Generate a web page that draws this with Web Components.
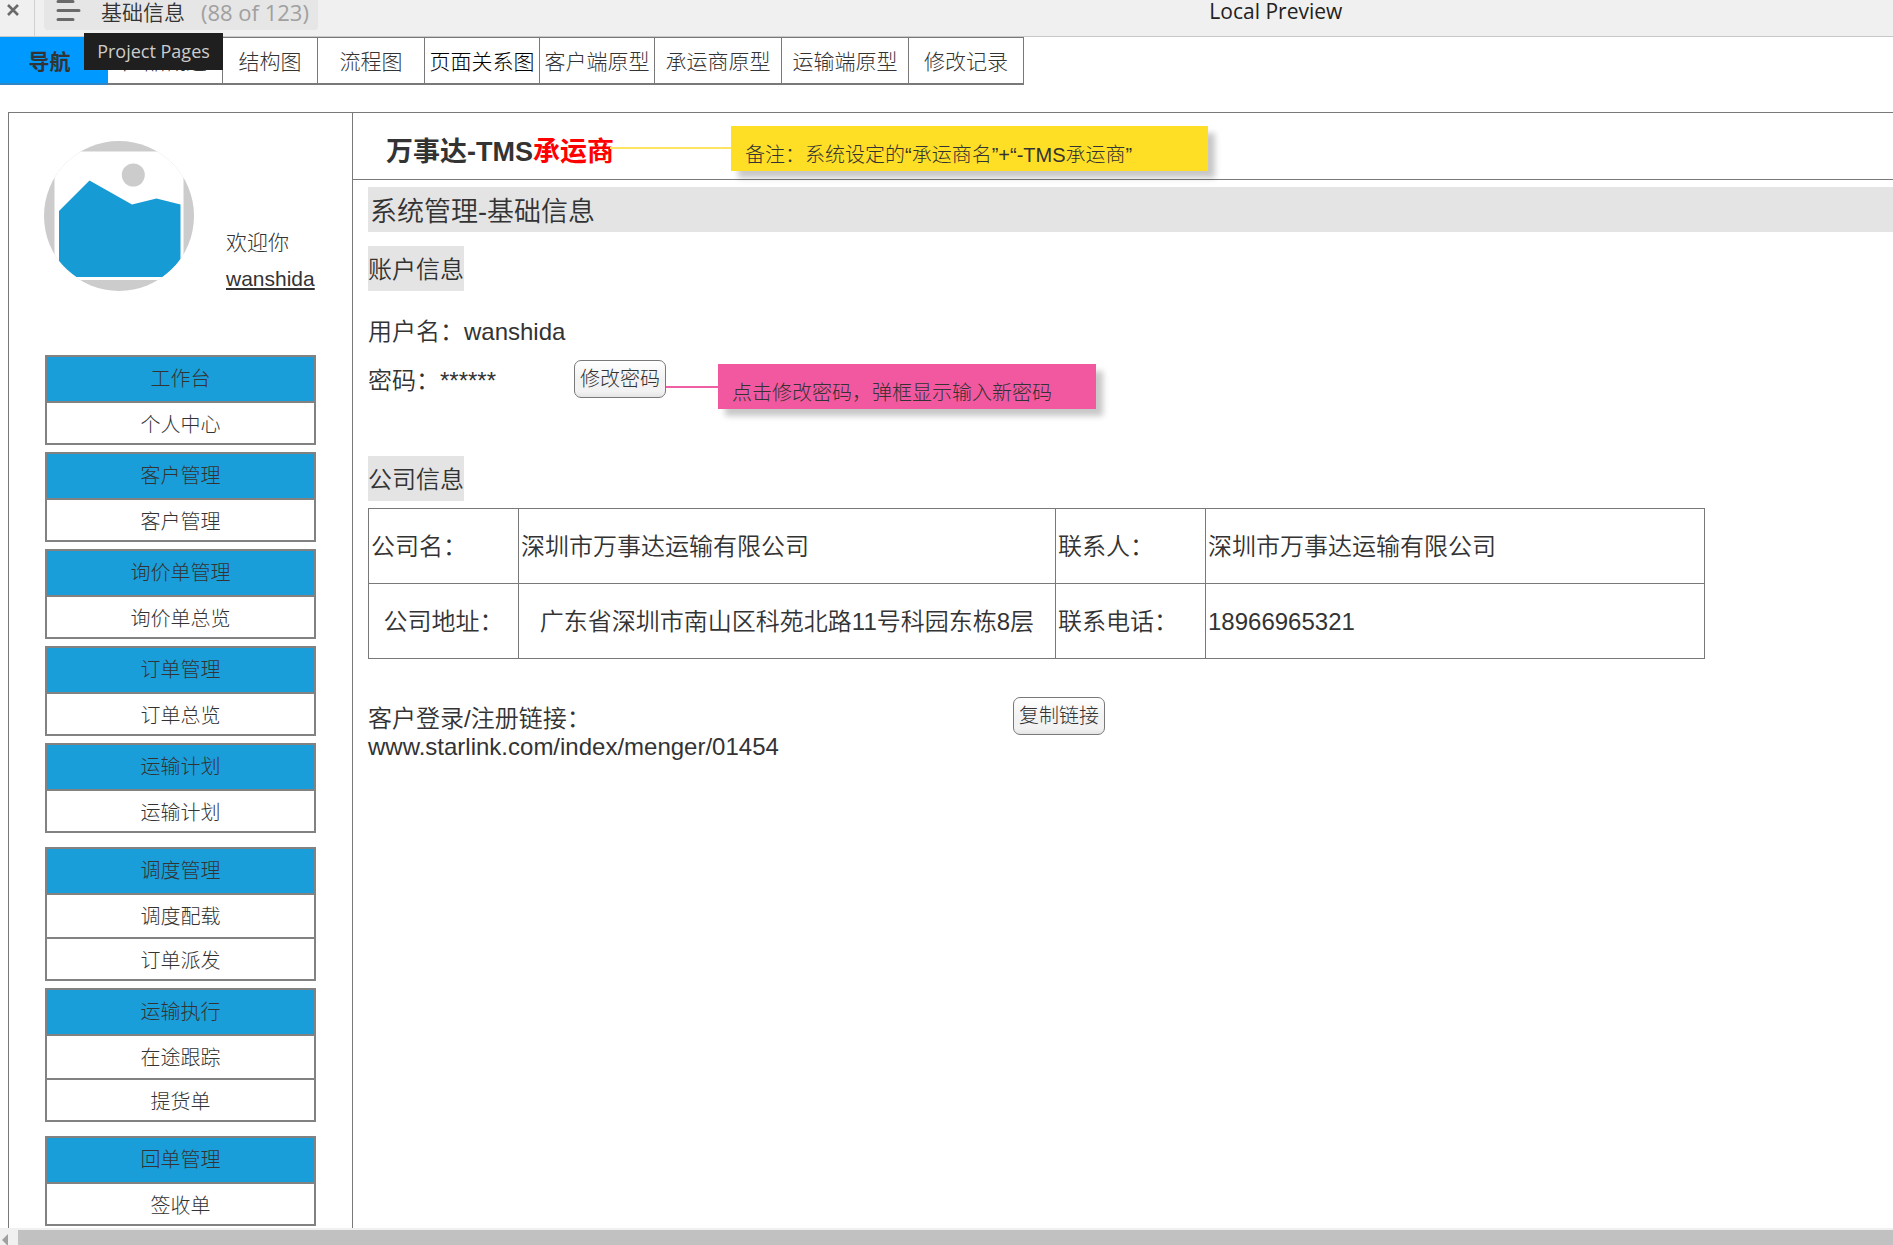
<!DOCTYPE html>
<html lang="zh-CN">
<head>
<meta charset="utf-8">
<title>基础信息</title>
<style>
  html, body { height: 100%; }
  body {
    margin: 0;
    overflow: hidden;
    background: #fff;
    color: #333;
    font-family: "Liberation Sans", "Noto Sans CJK SC", sans-serif;
    font-weight: 350;
    --line: #797979;
    --blue: #1a9ed9;
    --ui: "Open Sans", "Noto Sans CJK SC", sans-serif;
  }
</style>
</head>
<body>
<preview-app></preview-app>

<script>
const define = (name, html, setup) => {
  const template = document.createElement('template');
  template.innerHTML = html;
  customElements.define(name, class extends HTMLElement {
    constructor() {
      super();
      this.attachShadow({ mode: 'open' }).append(template.content.cloneNode(true));
    }
    connectedCallback() {
      if (setup) setup(this, this.shadowRoot);
    }
  });
};

/* Player toolbar */
define('preview-toolbar', `
  <style>
    :host { display: flex; height: 36px; background: #f0f0f0; border-bottom: 1px solid #c8c8c8; font: 400 21px/24px var(--ui); position: relative; z-index: 2; }
    button { font: inherit; color: inherit; border: 0; background: none; padding: 0; margin: 0; text-align: left; }
    .close { width: 35px; border-right: 1px solid #d0d0d0; box-sizing: border-box; display: flex; }
    .close svg { margin: 3px 0 0 6px; }
    .pages { position: relative; margin-left: 9px; height: 30px; padding: 0 9px 6px 12px; display: flex; align-items: center; background: #e6e6e6; border-radius: 0 0 4px 4px; }
    .pages svg { margin-right: 20px; }
    .name { color: #333; font-weight: 350; margin-right: 16px; }
    .count { color: #a0a0a0; font-size: 22px; }
    .tip { position: absolute; left: 40px; top: 33px; width: 139px; height: 37px; background: #1f1f1f; color: #ccc; font-size: 18px; line-height: 37px; text-align: center; }
    .title { flex: 1; text-align: center; color: #222; line-height: 22px; padding-left: 18%; }
  </style>
  <button class="close" aria-label="Close">
    <svg width="14" height="14" viewBox="0 0 14 14"><path d="M2 2 L12 12 M12 2 L2 12" stroke="#6a6a6a" stroke-width="2.6" fill="none"/></svg>
  </button>
  <button class="pages">
    <svg width="25" height="24" viewBox="0 0 25 24"><path d="M2 1.500 H17 M2 10.500 H23 M2 19.500 H17" stroke="#6a6a6a" stroke-width="3" stroke-linecap="round"/></svg>
    <span class="name">基础信息</span><span class="count">(88 of 123)</span>
    <span class="tip" role="tooltip">Project Pages</span>
  </button>
  <div class="title">Local Preview</div>
`);

/* Horizontal tabs */
define('nav-tabs', `
  <style>
    :host { display: flex; font-size: 21px; line-height: 47px; font-weight: 300; }
    ::slotted(nav-tab) { flex: none; }
  </style>
  <slot></slot>
`);
define('nav-tab', `
  <style>
    :host { display: block; box-sizing: border-box; width: 107px; height: 48px; border: solid var(--line); border-width: 1px 1px 2px 0; }
    :host([size="s"]) { width: 95px; }
    :host([size="l"]) { width: 115px; }
    :host([size="xl"]) { width: 127px; }
    :host([active]) { width: 108px; background: #0099ff; border-color: #0099ff #0099ff #2f86c4; font-weight: 700; padding-right: 8px; }
    a { display: block; color: #333; text-decoration: none; text-align: center; white-space: nowrap; }
    :host([current]) a { color: #000; }
  </style>
  <a href="#"><slot></slot></a>
`);

/* Sidebar */
define('user-card', `
  <style>
    :host { display: flex; align-items: flex-start; padding: 28px 0 0 35px; font-size: 21px; line-height: 36px; font-weight: 300; }
    svg { flex: none; display: block; }
    div { padding: 84px 0 0 32px; }
    a { display: block; color: #333; text-underline-offset: 2px; text-decoration-thickness: 2px; }
  </style>
  <svg width="150" height="150" viewBox="0 0 150 150">
    <defs><clipPath id="c"><circle cx="75" cy="75" r="75"/></clipPath></defs>
    <g clip-path="url(#c)">
      <rect width="150" height="150" fill="#ccc"/>
      <rect x="10.500" y="10.500" width="129" height="128.500" fill="#fff"/>
      <circle cx="89.300" cy="34" r="11.500" fill="#ccc"/>
      <path d="M15 70 L45.500 39.500 L88 63.500 L112.500 57.500 L136.500 63.500 V118.500 Q128 129 118.500 136 H32.500 Q23 129.500 15 120 Z" fill="#169bd5"/>
    </g>
  </svg>
  <div><span>欢迎你</span><a href="#">wanshida</a></div>
`);
define('menu-group', `
  <style>
    :host { display: block; border: 2px solid #828282; font-size: 20px; line-height: 44px; font-weight: 300; text-align: center; }
    :host([apart]) { margin-top: 7px; }
    a { display: block; height: 42px; color: #333; text-decoration: none; }
    a + a { border-top: 2px solid #828282; }
    a:first-child { height: 44px; background: var(--blue); }
    a:last-child { height: 40px; }
  </style>
  <nav></nav>
`, (host, root) => {
  root.querySelector('nav').replaceChildren(...host.getAttribute('items').split(' ').map(text => {
    const a = document.createElement('a');
    a.href = '#';
    a.textContent = text;
    return a;
  }));
});
define('side-bar', `
  <style>
    :host { display: block; flex: none; width: 343px; border-right: 1px solid var(--line); }
    .menu { display: flex; flex-direction: column; gap: 7px; margin: 58px 36px 0; }
  </style>
  <user-card></user-card>
  <div class="menu">
    <menu-group items="工作台 个人中心"></menu-group>
    <menu-group items="客户管理 客户管理"></menu-group>
    <menu-group items="询价单管理 询价单总览"></menu-group>
    <menu-group items="订单管理 订单总览"></menu-group>
    <menu-group items="运输计划 运输计划"></menu-group>
    <menu-group apart items="调度管理 调度配载 订单派发"></menu-group>
    <menu-group items="运输执行 在途跟踪 提货单"></menu-group>
    <menu-group apart items="回单管理 签收单"></menu-group>
  </div>
`);

/* Shared parts */
define('sticky-note', `
  <style>
    :host { display: block; box-sizing: border-box; height: 45px; padding: 15px 14px 0; background: #ffdf25; box-shadow: 7px 7px 6px rgba(0,0,0,.22); font-size: 20px; line-height: 28px; font-weight: 300; white-space: nowrap; color: #333; }
    :host([tone="pink"]) { background: #f2589f; }
  </style>
  <slot></slot>
`);
define('push-button', `
  <style>
    :host { display: flex; flex: none; font-weight: 300; }
    button { box-sizing: border-box; height: 38px; width: 92px; padding: 0; border: 1px solid var(--line); border-radius: 7px; background: linear-gradient(#fff, #f2f2f2 50%, #f2f2f2 85%, #e4e4e4); font: inherit; font-size: 20px; line-height: 36px; color: #333; white-space: nowrap; }
  </style>
  <button><slot></slot></button>
`);
define('section-label', `
  <style>
    :host { display: block; width: fit-content; background: #e4e4e4; font-size: 24px; line-height: 43px; padding-top: 2px; }
    h2 { margin: 0; font: inherit; }
  </style>
  <h2><slot></slot></h2>
`);

/* Content */
define('brand-header', `
  <style>
    :host { display: flex; align-items: center; padding: 13px 0 8px 33px; border-bottom: 1px solid var(--line); }
    h1 { margin: 0; padding-top: 6px; font-size: 27px; line-height: 36px; font-weight: 700; white-space: nowrap; }
    em { font-style: normal; color: #f00; }
    i { width: 121px; height: 2px; margin: 0 0 2px -4px; background: #ffe463; }
    sticky-note { width: 477px; }
  </style>
  <h1>万事达-TMS<em>承运商</em></h1><i></i>
  <sticky-note>备注：系统设定的“承运商名”+“-TMS承运商”</sticky-note>
`);
define('company-table', `
  <style>
    :host { display: block; margin-top: 7px; }
    table { width: 1337px; border-collapse: collapse; table-layout: fixed; font-size: 24px; line-height: 36px; }
    th, td { height: 75px; box-sizing: border-box; border: 1px solid var(--line); padding: 2px 2px 0; font-weight: inherit; text-align: left; white-space: nowrap; }
    .mid { text-align: center; }
    .key { width: 150px; }
    .wide { width: 537px; }
  </style>
  <table>
    <colgroup><col class="key"><col class="wide"><col class="key"><col></colgroup>
    <tr><th>公司名：</th><td>深圳市万事达运输有限公司</td><th>联系人：</th><td>深圳市万事达运输有限公司</td></tr>
    <tr><th class="mid">公司地址：</th><td class="mid">广东省深圳市南山区科苑北路11号科园东栋8层</td><th>联系电话：</th><td>18966965321</td></tr>
  </table>
`);
define('info-page', `
  <style>
    :host { display: block; flex: 1; min-width: 0; font-size: 24px; }
    .body { padding: 7px 0 0 15px; }
    .bar { background: #e4e4e4; font-size: 27px; line-height: 39px; padding: 6px 2px 0; margin-bottom: 14px; }
    .user { line-height: 42px; margin-top: 20px; }
    .row { display: flex; align-items: flex-start; }
    .pass { margin: 7px 0 47px; line-height: 42px; }
    .pass span { width: 206px; }
    .pass i { width: 52px; height: 2px; margin-top: 26px; background: #ee5fa3; }
    .pass sticky-note { width: 378px; margin-top: 4px; }
    .link { margin-top: 38px; line-height: 28px; }
    .link p { margin: 8px 0 0; width: 645px; }
  </style>
  <brand-header></brand-header>
  <div class="body">
    <div class="bar">系统管理-基础信息</div>
    <section-label>账户信息</section-label>
    <div class="user">用户名：wanshida</div>
    <div class="row pass">
      <span>密码：******</span>
      <push-button>修改密码</push-button><i></i>
      <sticky-note tone="pink">点击修改密码，弹框显示输入新密码</sticky-note>
    </div>
    <section-label>公司信息</section-label>
    <company-table></company-table>
    <div class="row link">
      <p>客户登录/注册链接：<br>www.starlink.com/index/menger/01454</p>
      <push-button>复制链接</push-button>
    </div>
  </div>
`);
define('scroll-strip', `
  <style>
    :host { display: flex; flex: none; height: 15px; padding-top: 2px; background: #f0f0f0; overflow: hidden; }
    svg { flex: none; width: 18px; height: 15px; }
    div { flex: 1; background: #c1c1c1; }
  </style>
  <svg viewBox="0 0 18 15"><path d="M2 10 L8 4 V16 Z" fill="#a0a0a0"/></svg><div></div>
`);
define('preview-app', `
  <style>
    :host { display: flex; flex-direction: column; height: 100vh; }
    preview-toolbar, nav-tabs { flex: none; }
    .frame { flex: 1; min-height: 0; overflow: hidden; display: flex; margin: 27px 0 0 8px; border: solid var(--line); border-width: 1px 0 0 1px; }
  </style>
  <preview-toolbar></preview-toolbar>
  <nav-tabs>
    <nav-tab active>导航</nav-tab>
    <nav-tab size="l">产品概述</nav-tab>
    <nav-tab size="s">结构图</nav-tab>
    <nav-tab>流程图</nav-tab>
    <nav-tab size="l" current>页面关系图</nav-tab>
    <nav-tab size="l">客户端原型</nav-tab>
    <nav-tab size="xl">承运商原型</nav-tab>
    <nav-tab size="xl">运输端原型</nav-tab>
    <nav-tab size="l">修改记录</nav-tab>
  </nav-tabs>
  <div class="frame"><side-bar></side-bar><info-page></info-page></div>
  <scroll-strip></scroll-strip>
`);
</script>
</body>
</html>
